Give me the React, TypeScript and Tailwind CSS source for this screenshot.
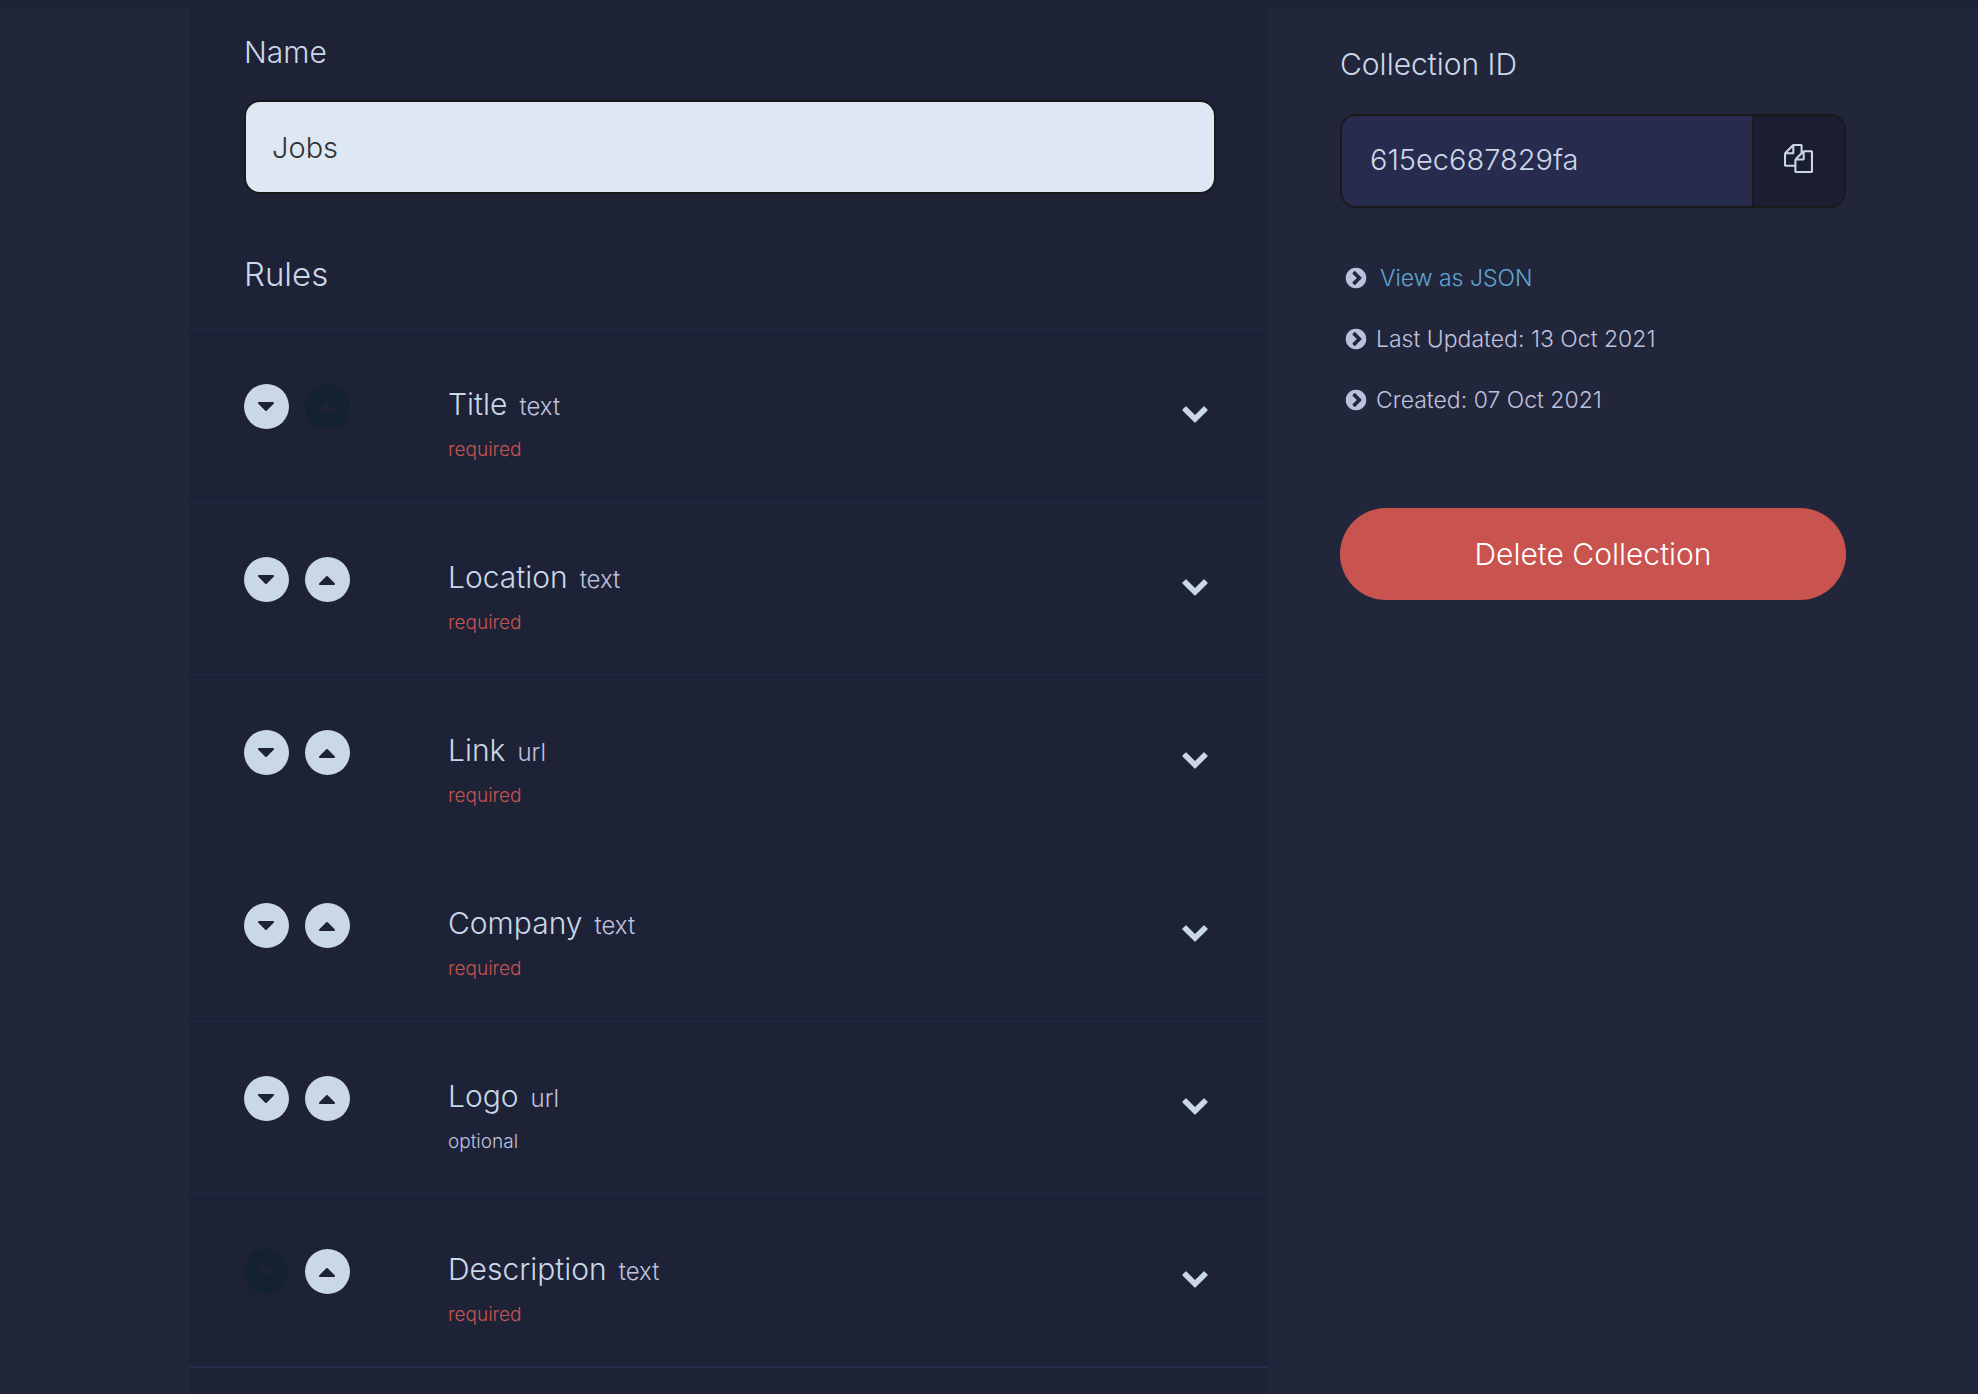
/**
 * Collection settings page
 *
 * Left: the collection name and its ordered list of rules.
 * Right: collection ID, meta information and the delete action.
 */

type IconName = "caretDown" | "caretUp" | "chevronDown" | "chevronCircleRight" | "copy";

interface Rule {
  label: string;
  type: string;
  required: boolean;
}

const RULES: Rule[] = [
  { label: "Title", type: "text", required: true },
  { label: "Location", type: "text", required: true },
  { label: "Link", type: "url", required: true },
  { label: "Company", type: "text", required: true },
  { label: "Logo", type: "url", required: false },
  { label: "Description", type: "text", required: true },
];

const ICON_PATHS: Record<IconName, string> = {
  caretDown:
    "M1408 704q0 26-19 45l-448 448q-19 19-45 19t-45-19l-448-448q-19-19-19-45t19-45 45-19h896q26 0 45 19t19 45z",
  caretUp:
    "M1408 1216q0 26-19 45t-45 19h-896q-26 0-45-19t-19-45 19-45l448-448q19-19 45-19t45 19l448 448q19 19 19 45z",
  chevronDown:
    "M1683 808l-742 741q-19 19-45 19t-45-19l-742-741q-19-19-19-45.5t19-45.5l166-165q19-19 45-19t45 19l531 531 531-531q19-19 45-19t45 19l166 165q19 19 19 45.5t-19 45.5z",
  chevronCircleRight:
    "M845 1395l454-454q19-19 19-45t-19-45l-454-454q-19-19-45-19t-45 19l-102 102q-19 19-19 45t19 45l307 307-307 307q-19 19-19 45t19 45l102 102q19 19 45 19t45-19zm819-499q0 209-103 385.5t-279.5 279.5-385.5 103-385.5-103-279.5-279.5-103-385.5 103-385.5 279.5-279.5 385.5-103 385.5 103 279.5 279.5 103 385.5z",
  copy: "M1696 384q40 0 68 28t28 68v1216q0 40-28 68t-68 28h-960q-40 0-68-28t-28-68v-288h-544q-40 0-68-28t-28-68v-672q0-40 20-88t48-76l408-408q28-28 76-48t88-20h416q40 0 68 28t28 68v328q68-40 128-40h416zm-544 213l-299 299h299v-299zm-640-384l-299 299h299v-299zm196 647l316-316v-416h-384v416q0 40-28 68t-68 28h-416v640h512v-256q0-40 20-88t48-76zm956 804v-1152h-384v416q0 40-28 68t-68 28h-416v640h896z",
};

function Icon({ name, className }: { name: IconName; className: string }) {
  return (
    <svg viewBox="0 0 1792 1792" fill="currentColor" aria-hidden="true" className={className}>
      <path d={ICON_PATHS[name]} />
    </svg>
  );
}

interface MoveButtonProps {
  direction: "down" | "up";
  label: string;
  disabled: boolean;
}

function MoveButton({ direction, label, disabled }: MoveButtonProps) {
  return (
    <button
      type="button"
      disabled={disabled}
      aria-label={`Move ${label} ${direction}`}
      className="flex size-[45px] items-center justify-center rounded-full bg-[#cad7e7] pr-px pb-px text-[#1e2237] disabled:bg-[#142131]"
    >
      <Icon name={direction === "down" ? "caretDown" : "caretUp"} className="size-7" />
    </button>
  );
}

interface RuleRowProps {
  rule: Rule;
  isFirst: boolean;
  isLast: boolean;
}

function RuleRow({ rule, isFirst, isLast }: RuleRowProps) {
  return (
    <li className="flex items-start border-b-2 border-[#22263c] pt-[54px] pr-[59px] pb-[37px] pl-[54px] last:border-[#272c4f]">
      <div className="flex w-[204px] shrink-0 gap-4">
        <MoveButton direction="down" label={rule.label} disabled={isLast} />
        <MoveButton direction="up" label={rule.label} disabled={isFirst} />
      </div>

      <div className="flex-1">
        <p className="flex h-10 items-baseline gap-3 text-[30px] leading-10">
          {rule.label}
          <span className="text-2xl text-[#bec1de]">{rule.type}</span>
        </p>
        <p className={rule.required ? "mt-3 text-[19px] leading-7 text-[#c8534f]" : "mt-3 text-[19px] leading-7 text-[#bec1de]"}>
          {rule.required ? "required" : "optional"}
        </p>
      </div>

      <button type="button" aria-label={`Edit ${rule.label}`} className="mt-3.5">
        <Icon name="chevronDown" className="size-7" />
      </button>
    </li>
  );
}

export default function App() {
  return (
    <div className="min-h-screen bg-[#22263b] font-['Inter',sans-serif] font-light text-[#cad7e7]">
      <div className="h-2 bg-[#1e2237]" />

      <div className="grid grid-cols-[minmax(0,1078fr)_minmax(0,650fr)] pr-[60px] pl-[190px]">
        <main className="min-h-[calc(100vh-8px)] bg-[#1e2237]">
          <div className="pt-6 pr-[52px] pl-[54px]">
            <label htmlFor="name" className="block text-[30px] leading-10">
              Name
            </label>
            <input
              id="name"
              type="text"
              defaultValue="Jobs"
              className="mt-7 block h-[94px] w-full rounded-2xl border-2 border-[#1a1a1a] bg-[#dde8f4] px-[26px] text-[29px] text-[#333333] outline-none"
            />
            <h2 className="mt-[58px] text-[33px] leading-[44px]">Rules</h2>
          </div>

          <ul className="mt-8 border-t-2 border-[#22263c]">
            {RULES.map((rule, index) => (
              <RuleRow key={rule.label} rule={rule} isFirst={index === 0} isLast={index === RULES.length - 1} />
            ))}
          </ul>
        </main>

        <aside className="px-[72px] pt-9">
          <label htmlFor="collection-id" className="block text-[30px] leading-10">
            Collection ID
          </label>
          <div className="mt-[30px] flex h-[94px] overflow-hidden rounded-2xl border-2 border-[#1a1a1a] bg-[#272c4f]">
            <input
              id="collection-id"
              type="text"
              readOnly
              value="615ec687829fa"
              className="min-w-0 flex-1 border-r-2 border-[#1a1a1a] px-7 pb-0.5 text-[29px] outline-none"
            />
            <button
              type="button"
              aria-label="Copy collection ID"
              className="flex w-[90px] items-center justify-center bg-[#1b1e32] pr-0.5 pb-1.5"
            >
              <Icon name="copy" className="size-[29px]" />
            </button>
          </div>

          <ul className="mt-[50px] space-y-[21px] pl-1 text-[23px] leading-10 text-[#bec1de]">
            <li className="flex items-center gap-3">
              <Icon name="chevronCircleRight" className="size-6" />
              <a href="#json" className="text-[#5fa5d3]">
                View as JSON
              </a>
            </li>
            <li className="flex items-center gap-2">
              <Icon name="chevronCircleRight" className="size-6" />
              Last Updated: 13 Oct 2021
            </li>
            <li className="flex items-center gap-2">
              <Icon name="chevronCircleRight" className="size-6" />
              Created: 07 Oct 2021
            </li>
          </ul>

          <button type="button" className="mt-[88px] h-[92px] w-full rounded-full bg-[#c8534f] text-[30px] text-white">
            Delete Collection
          </button>
        </aside>
      </div>
    </div>
  );
}
